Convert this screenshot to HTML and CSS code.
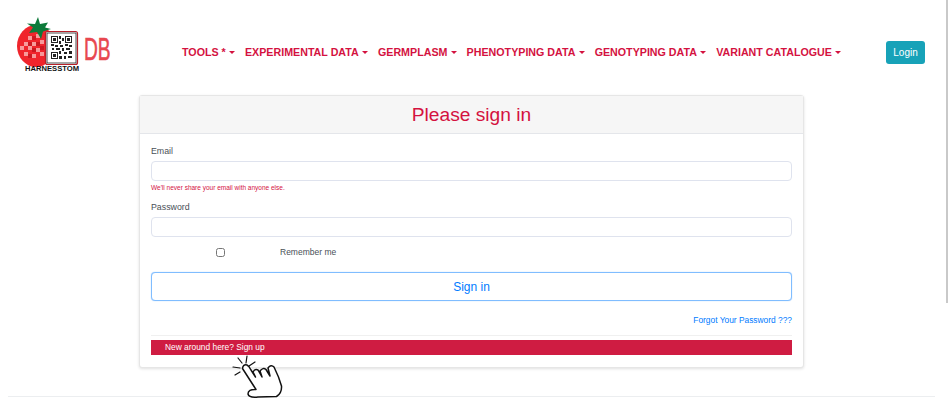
FILE: index.html
```html
<!DOCTYPE html>
<html lang="en">
<head>
  <meta charset="UTF-8" />
  <meta name="viewport" content="width=device-width, initial-scale=1" />
  <title>HarnessTom DB - Sign in</title>
  <link rel="stylesheet" href="styles.css">
</head>
<body>

  <header class="topbar">
    <a class="logo" href="#">
      <svg width="100" height="60" viewBox="0 0 100 60" role="img" aria-label="HarnessTom DB">
        <ellipse cx="22" cy="31" rx="19" ry="21" fill="#f0252c"/>
        <path fill="#f79a9a" d="M14 21h4v4h-4zM22 19h4v4h-4zM10 27h4v4h-4zM18 27h4v4h-4zM26 25h4v4h-4zM14 31h4v4h-4zM6 31h4v4H6zM22 33h4v4h-4zM10 37h4v4h-4zM18 39h4v4h-4zM26 37h4v4h-4z"/>
        <path fill="#cc1820" d="M18 21h4v4h-4zM14 27h4v4h-4zM22 27h4v4h-4zM18 33h4v4h-4zM14 39h4v4h-4zM26 31h4v4h-4z"/>
        <path fill="#0d7a3a" d="M24 2l2 7 8-1.500-3 5 6 1.500-8 2.500-2 7.500-4-7-8 1 4-5.500-6-4 8 .5z"/>
        <rect x="31.500" y="16.500" width="32" height="33" rx="2" fill="#fff" stroke="#b8202a" stroke-width="1.200"/>
        <rect x="33" y="18" width="29" height="30" fill="none" stroke="#222" stroke-width=".8"/>
        <path fill="#222" d="M37 21h7v7h-7zM51 21h7v7h-7zM37 37h7v7h-7z"/>
        <path fill="#fff" d="M38 22h5v5h-5zM52 22h5v5h-5zM38 38h5v5h-5z"/>
        <path fill="#222" d="M39 23h3v3h-3zM53 23h3v3h-3zM39 39h3v3h-3zM45 21h2v3h-2zM48 23h2v3h-2zM45 26h2v3h-2zM37 29h3v2h-3zM41 30h3v2h-3zM46 30h3v2h-3zM51 29h3v2h-3zM55 30h3v2h-3zM38 33h2v2h-2zM42 33h4v2h-4zM48 33h2v3h-2zM52 33h4v2h-4zM45 36h2v3h-2zM50 37h3v2h-3zM55 36h3v3h-3zM45 41h3v3h-3zM50 41h2v3h-2zM54 41h4v2h-4z"/>
        <text class="logo-name" x="11" y="56" textLength="54" lengthAdjust="spacingAndGlyphs">HARNESSTOM</text>
        <text class="logo-db" transform="translate(70 45) scale(.6 1)">DB</text>
      </svg>
    </a>
    <nav class="menu">
      <a href="#" class="menu-item">TOOLS *</a>
      <a href="#" class="menu-item">EXPERIMENTAL DATA</a>
      <a href="#" class="menu-item">GERMPLASM</a>
      <a href="#" class="menu-item">PHENOTYPING DATA</a>
      <a href="#" class="menu-item">GENOTYPING DATA</a>
      <a href="#" class="menu-item">VARIANT CATALOGUE</a>
    </nav>
    <a href="#" class="btn-login">Login</a>
  </header>

  <main class="content">
    <div class="card">
      <h1 class="card-header">Please sign in</h1>
      <form class="card-body">
        <label class="field-label" for="email">Email</label>
        <input class="field" id="email" type="email">
        <small class="field-help">We'll never share your email with anyone else.</small>

        <label class="field-label" for="password">Password</label>
        <input class="field" id="password" type="password">

        <div class="remember">
          <input class="remember-box" id="remember" type="checkbox">
          <label for="remember">Remember me</label>
        </div>

        <button class="btn-signin" type="button">Sign in</button>
        <a class="forgot" href="#">Forgot Your Password ???</a>
        <hr class="divider">
        <a class="signup" href="#">New around here? Sign up</a>
      </form>

      <svg class="hand" width="60" height="50" viewBox="0 0 60 50" aria-hidden="true">
        <path fill="#fff" stroke="#111" stroke-width="1.500" stroke-linejoin="round" d="M13.500 17.500Q14 13 18 14Q20 15 22 19L26.500 26L24 21Q26 17.500 29 19L33 26L31 20Q34 16 37 18.500L41 25L39 17Q42 13 45 16Q50 26 52.500 35Q53 42 47.500 45.500L29 46Q20 47 19 43Q19 38 27 38.500Z"/>
        <path fill="none" stroke="#111" stroke-width="1.200" stroke-linecap="round" d="M9 7l4 5M18 5l-1 7M26 11l-6 4M4 16l7 1M6 24l5-3"/>
      </svg>
    </div>
  </main>

  <div class="scroll-thumb"></div>

</body>
</html>
```

FILE: styles.css
```css
html, body {
  height: 100%;
}

body {
  font-family: "Liberation Sans", Arial, sans-serif;
  margin: 0;
  background: white;
  color: #495057;
  overflow: hidden;
}

a {
  text-decoration: none;
}

.topbar {
  display: flex;
  align-items: center;
  height: 95px;
  box-sizing: border-box;
  padding: 0 23px 0 14px;
}

.logo {
  display: block;
  width: 100px;
  height: 60px;
  margin-top: -5px;
}

.logo-name {
  font-size: 8px;
  font-weight: bold;
  fill: #111;
}

.logo-db {
  font-size: 32px;
  fill: #e8474f;
  stroke: #e8474f;
  stroke-width: .6px;
}

.menu {
  display: flex;
  gap: 10px;
  margin-left: 68px;
  flex: 1;
  margin-top: 9px;
}

.menu-item {
  color: #d4123f;
  font-size: 10.700px;
  font-weight: bold;
  white-space: nowrap;
}

.menu-item::after {
  content: "";
  display: inline-block;
  margin-left: 3.200px;
  vertical-align: 2px;
  border-top: 3.500px solid;
  border-left: 3.500px solid transparent;
  border-right: 3.500px solid transparent;
}

.btn-login {
  background: #17a2b8;
  color: white;
  font-size: 10px;
  width: 39px;
  height: 23px;
  line-height: 23px;
  text-align: center;
  border-radius: 3px;
  margin-top: 10px;
}

.content {
  margin: 0 13px 0 8px;
  height: 302px;
  box-sizing: border-box;
  border-bottom: 1px solid #eceef0;
  padding-left: 131px;
}

.card {
  position: relative;
  width: 665px;
  height: 273px;
  box-sizing: border-box;
  border: 1px solid #e6e6e6;
  border-radius: 3px;
  box-shadow: 0 1px 3px rgba(0,0,0,0.12);
  background: white;
}

.card-header {
  margin: 0;
  height: 37px;
  line-height: 37px;
  background: #f6f6f6;
  border-bottom: 1px solid #e4e6ea;
  color: #d4123f;
  font-size: 19.200px;
  font-weight: normal;
  text-align: center;
}

.card-body {
  display: flex;
  flex-direction: column;
  padding: 11px 11px 0;
}

.field-label {
  font-size: 8.800px;
  line-height: 12px;
  margin-bottom: 4px;
}

.field {
  box-sizing: border-box;
  height: 20px;
  border: 1px solid #dfe3ee;
  border-radius: 4px;
  background: white;
  padding: 0 8px;
}

.field-help {
  color: #d4123f;
  font-size: 6.500px;
  line-height: 8px;
  margin: 3px 0 9px;
}

.remember {
  display: flex;
  align-items: center;
  font-size: 8.500px;
  height: 14px;
  margin: 8px 0 13px;
}

.remember-box {
  box-sizing: border-box;
  width: 9px;
  height: 9px;
  margin: 0 55px 0 65px;
}

.btn-signin {
  height: 29px;
  background: white;
  border: 1px solid #80bdff;
  border-radius: 4px;
  box-shadow: 0 0 1px #80bdff;
  color: #007bff;
  font-family: inherit;
  font-size: 12px;
  padding: 0;
}

.forgot {
  align-self: flex-end;
  color: #007bff;
  font-size: 8.400px;
  line-height: 12px;
  margin-top: 13px;
}

.divider {
  width: 100%;
  border: 0;
  border-top: 1px solid #f0f0f0;
  margin: 9px 0 4px;
}

.signup {
  background: #cf1c42;
  color: white;
  font-size: 8.400px;
  height: 15px;
  line-height: 15px;
  padding-left: 14px;
}

.hand {
  position: absolute;
  left: 89px;
  top: 255px;
}

.scroll-thumb {
  position: fixed;
  top: 0;
  right: 0;
  width: 2px;
  height: 303px;
  background: #c9c9c9;
}
```
